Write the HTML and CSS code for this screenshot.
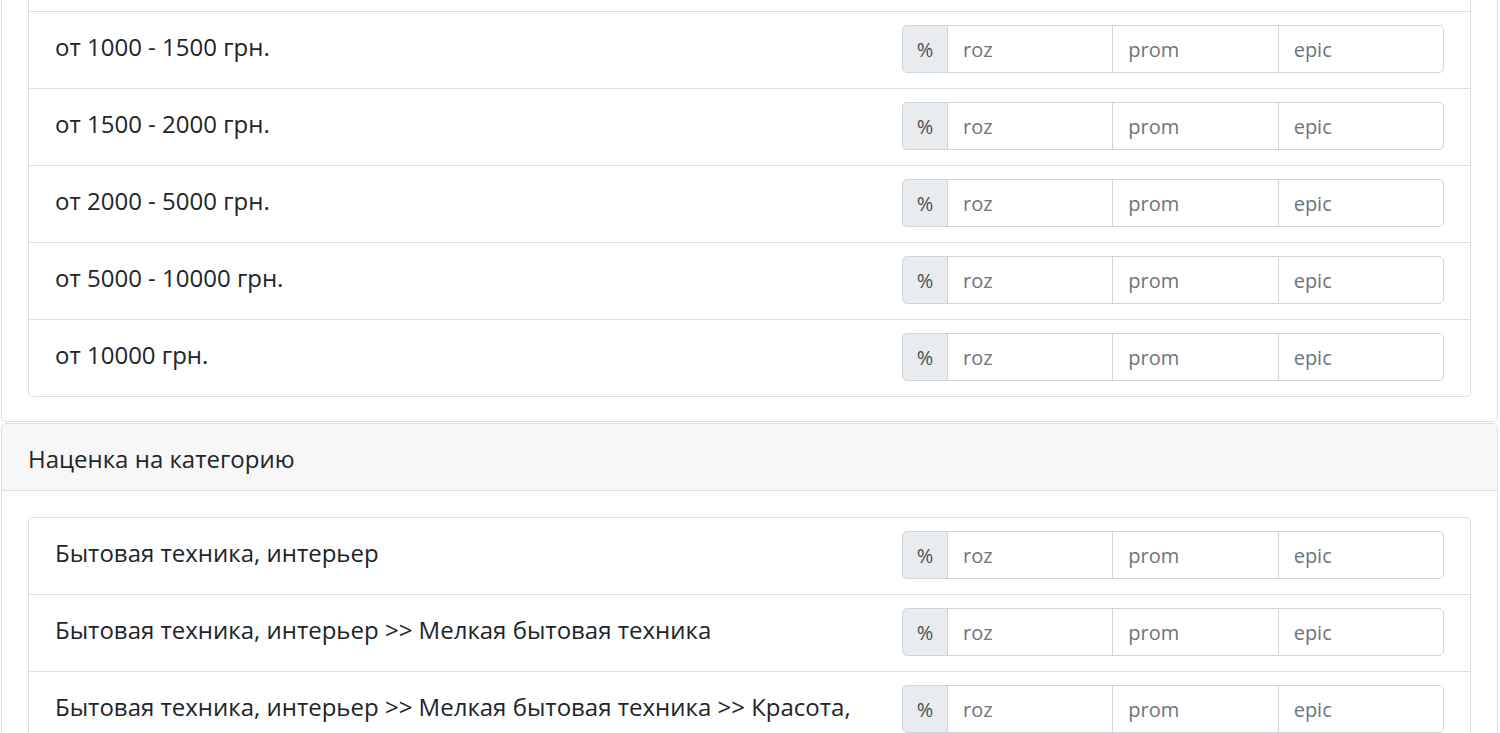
FILE: index.html
```html
<!DOCTYPE html>
<html lang="ru">
<head>
  <meta charset="UTF-8">
  <title>Наценки</title>
  <link rel="stylesheet" href="styles.css">
</head>
<body>
  <div class="page">
    <div class="card cut">
      <div class="card-body">
        <div class="list-group">
          <div class="list-item">
            <div class="label">от 1000 - 1500 грн.</div>
            <div class="input-group">
              <span class="addon">%</span>
              <input class="field" placeholder="roz">
              <input class="field" placeholder="prom">
              <input class="field" placeholder="epic">
            </div>
          </div>
          <div class="list-item">
            <div class="label">от 1500 - 2000 грн.</div>
            <div class="input-group">
              <span class="addon">%</span>
              <input class="field" placeholder="roz">
              <input class="field" placeholder="prom">
              <input class="field" placeholder="epic">
            </div>
          </div>
          <div class="list-item">
            <div class="label">от 2000 - 5000 грн.</div>
            <div class="input-group">
              <span class="addon">%</span>
              <input class="field" placeholder="roz">
              <input class="field" placeholder="prom">
              <input class="field" placeholder="epic">
            </div>
          </div>
          <div class="list-item">
            <div class="label">от 5000 - 10000 грн.</div>
            <div class="input-group">
              <span class="addon">%</span>
              <input class="field" placeholder="roz">
              <input class="field" placeholder="prom">
              <input class="field" placeholder="epic">
            </div>
          </div>
          <div class="list-item">
            <div class="label">от 10000 грн.</div>
            <div class="input-group">
              <span class="addon">%</span>
              <input class="field" placeholder="roz">
              <input class="field" placeholder="prom">
              <input class="field" placeholder="epic">
            </div>
          </div>
        </div>
      </div>
    </div>

    <div class="card">
      <div class="card-header">Наценка на категорию</div>
      <div class="card-body">
        <div class="list-group">
          <div class="list-item">
            <div class="label">Бытовая техника, интерьер</div>
            <div class="input-group">
              <span class="addon">%</span>
              <input class="field" placeholder="roz">
              <input class="field" placeholder="prom">
              <input class="field" placeholder="epic">
            </div>
          </div>
          <div class="list-item">
            <div class="label">Бытовая техника, интерьер &gt;&gt; Мелкая бытовая техника</div>
            <div class="input-group">
              <span class="addon">%</span>
              <input class="field" placeholder="roz">
              <input class="field" placeholder="prom">
              <input class="field" placeholder="epic">
            </div>
          </div>
          <div class="list-item">
            <div class="label">Бытовая техника, интерьер &gt;&gt; Мелкая бытовая техника &gt;&gt; Красота, здоровье</div>
            <div class="input-group">
              <span class="addon">%</span>
              <input class="field" placeholder="roz">
              <input class="field" placeholder="prom">
              <input class="field" placeholder="epic">
            </div>
          </div>
        </div>
      </div>
    </div>
  </div>
</body>
</html>
```

FILE: styles.css
```css
body {
  margin: 0;
  font-family: "Open Sans", "Noto Sans", sans-serif;
  font-size: 24px;
  color: #212529;
  background: #fff;
}
.page {
  padding: 0 2px 0 1px;
}
.card {
  border: 1px solid #dfdfdf;
  border-radius: 5px;
  background: #fff;
  margin-bottom: 1px;
}
/* верх карточки прокручен за край окна */
.card.cut {
  border-top: 0;
  border-radius: 0 0 5px 5px;
}
.card.cut .card-body {
  padding-top: 0;
}
.card.cut .list-group {
  border-top: 0;
  padding-top: 11px;
  border-radius: 0 0 5px 5px;
}
.card.cut .list-item:first-child {
  border-top: 1px solid #dfdfdf;
}
.card-header {
  background: #f7f7f7;
  border-bottom: 1px solid #dfdfdf;
  padding: 20px 26px 16px;
  line-height: 30px;
  border-radius: 5px 5px 0 0;
}
.card-body {
  padding: 26px 26px 24px;
}
.list-group {
  border: 1px solid #dfdfdf;
  border-radius: 5px;
}
.list-item {
  display: flex;
  align-items: flex-start;
  padding: 13px 26px 15px;
  border-top: 1px solid #dfdfdf;
}
.list-item:first-child {
  border-top: 0;
}
.label {
  flex: 1;
  padding-top: 7px;
  margin-right: 26px;
  line-height: 30px;
}
.input-group {
  display: flex;
  width: 542px;
  height: 48px;
}
.addon {
  display: flex;
  align-items: center;
  justify-content: center;
  width: 44px;
  background: #e9ecef;
  border: 1px solid #ced4da;
  border-radius: 5px 0 0 5px;
  color: #495057;
  font-size: 20px;
}
.field {
  flex: 1;
  min-width: 0;
  margin-left: -1px;
  padding: 0 15px;
  border: 1px solid #ced4da;
  font-family: inherit;
  font-size: 20px;
  color: #495057;
  outline: none;
}
.field:last-child {
  border-radius: 0 5px 5px 0;
}
.field::placeholder {
  color: #6c757d;
}
```
